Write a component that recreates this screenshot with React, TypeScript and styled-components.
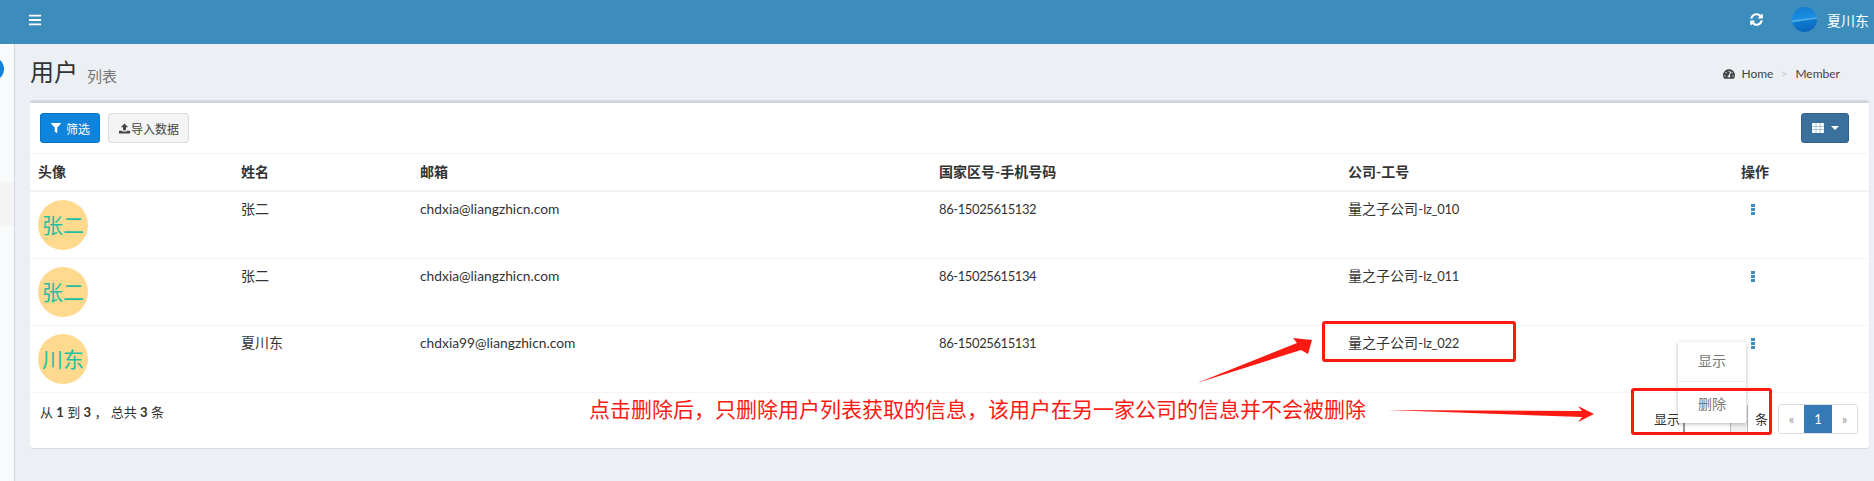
import styled, { createGlobalStyle } from "styled-components";
import { FaBars, FaSyncAlt, FaFilter, FaTachometerAlt } from "react-icons/fa";

const GlobalStyle = createGlobalStyle`
  html, body {
    margin: 0;
    padding: 0;
    background: #ecf0f5;
  }
  body {
    width: 1874px;
    height: 481px;
    overflow: hidden;
    font-family: "Lato", "Noto Sans CJK SC", sans-serif;
    font-size: 14px;
    color: #333;
  }
`;

const Page = styled.div`
  position: relative;
  width: 1874px;
  height: 481px;
  overflow: hidden;
`;

const TopBar = styled.header`
  height: 44px;
  background: #3c8dbc;
  color: #fff;
  display: flex;
  align-items: center;
  padding: 0 0 5px 28px;
  box-sizing: border-box;
`;

const TopRight = styled.div`
  margin-left: auto;
  display: flex;
  align-items: center;
  gap: 29px;
  padding-right: 5px;
`;

const UserBox = styled.div`
  display: flex;
  align-items: center;
  gap: 10px;
  font-size: 14px;
`;

const UserAvatar = styled.div`
  width: 25px;
  height: 25px;
  border-radius: 50%;
  background: linear-gradient(172deg, #0f78cf 0%, #1a8fe0 46%, #5db4ea 50%, #0d7ad0 56%, #0a62b8 100%);
`;

const Body = styled.div`
  display: flex;
  height: 437px;
`;

const Sidebar = styled.aside`
  width: 14px;
  flex: none;
  background: #f9fafc;
  border-right: 1px solid #d2d6de;
  padding-top: 13px;
  overflow: hidden;
`;

const SideDot = styled.div`
  width: 24px;
  height: 24px;
  margin-left: -20px;
  border-radius: 50%;
  background: #1182dc;
`;

const SideItem = styled.div`
  height: 44px;
  margin-top: 101px;
  background: #f4f4f5;
`;

const Content = styled.main`
  flex: 1;
  padding: 0 5px 0 15px;
  min-width: 0;
`;

const TitleRow = styled.div`
  height: 56px;
  display: flex;
  align-items: center;
  box-sizing: border-box;
`;

const Title = styled.h1`
  margin: 0;
  font-size: 24px;
  font-weight: 400;
  line-height: 30px;
`;

const SubTitle = styled.small`
  margin-left: 9px;
  margin-top: 6px;
  font-size: 15px;
  color: #777;
`;

const Crumbs = styled.div`
  margin-left: auto;
  margin-top: 3px;
  display: flex;
  align-items: center;
  font-size: 12px;
  color: #444;
  padding-right: 29px;
`;

const CrumbSep = styled.span`
  color: #ccc;
  margin: 0 8px 0 7px;
`;

const CrumbHome = styled.span`
  margin-left: 6px;
`;

const Card = styled.section`
  background: #fff;
  border-top: 3px solid #d2d6de;
  border-radius: 3px;
  box-shadow: 0 1px 1px rgba(0, 0, 0, 0.1);
  height: 348px;
  box-sizing: border-box;
`;

const Toolbar = styled.div`
  height: 50px;
  padding: 10px 10px 0;
  box-sizing: border-box;
  display: flex;
  gap: 8px;
  align-items: flex-start;
`;

const Button = styled.button<{ $variant: "primary" | "plain" | "dark" }>`
  height: 30px;
  padding: 0 9px 0 10px;
  border-radius: 3px;
  font: inherit;
  font-size: 12px;
  display: inline-flex;
  align-items: center;
  gap: ${(p) => (p.$variant === "plain" ? "1px" : p.$variant === "dark" ? "7px" : "5px")};
  background: ${(p) =>
    p.$variant === "primary" ? "#0f84dc" : p.$variant === "dark" ? "#3c709c" : "#f4f4f4"};
  color: ${(p) => (p.$variant === "plain" ? "#444" : "#fff")};
  border: 1px solid
    ${(p) => (p.$variant === "primary" ? "#0b72c0" : p.$variant === "dark" ? "#32618a" : "#ddd")};
  margin-left: ${(p) => (p.$variant === "dark" ? "auto" : "0")};
  margin-right: ${(p) => (p.$variant === "dark" ? "10px" : "0")};
`;

const Caret = styled.span`
  width: 0;
  height: 0;
  border-left: 4px solid transparent;
  border-right: 4px solid transparent;
  border-top: 4px solid #fff;
`;

const Table = styled.table`
  width: 100%;
  border-collapse: collapse;
  table-layout: fixed;
`;

const Th = styled.th<{ $w: number }>`
  width: ${(p) => p.$w}px;
  height: 37px;
  padding: 0 8px 2px;
  box-sizing: border-box;
  text-align: left;
  font-size: 14px;
  font-weight: 700;
  border-top: 1px solid #f4f4f4;
  border-bottom: 2px solid #f4f4f4;
`;

const Td = styled.td`
  height: 67px;
  padding: 8px;
  box-sizing: border-box;
  vertical-align: top;
  font-size: 14px;
  line-height: 18px;
  border-bottom: 1px solid #f4f4f4;
`;

const MailCell = styled(Td)`
  font-size: 13.8px;
`;

const PhoneCell = styled(Td)`
  font-size: 13px;
  letter-spacing: -0.4px;
`;

const WorkNo = styled.span`
  font-size: 13px;
  letter-spacing: -0.3px;
`;

const Avatar = styled.div`
  width: 50px;
  height: 50px;
  border-radius: 50%;
  background: #ffd98e;
  color: #1fc0a0;
  font-size: 21px;
  line-height: 50px;
  text-align: center;
  white-space: nowrap;
`;

const MenuDots = styled.svg`
  display: block;
  margin: 4px 0 0 10px;
`;

const Footer = styled.div`
  display: flex;
  padding-top: 11px;
  align-items: flex-start;
  font-size: 13px;
`;

const Summary = styled.div`
  margin: -2px 0 0 10px;
  line-height: 20px;
`;

const PageSize = styled.div`
  margin-left: auto;
  display: flex;
  align-items: center;
  height: 30px;
  font-size: 13px;
`;

const SizeSelect = styled.div`
  width: 65px;
  height: 28px;
  margin: 0 7px 0 3px;
  box-sizing: border-box;
  border-left: 2px solid #999;
  border-right: 1px solid #bbb;
  border-bottom: 1px solid #ccc;
  display: flex;
  justify-content: flex-end;
  align-items: flex-end;
`;

const SelectArrow = styled.div`
  width: 17px;
  height: 11px;
  box-sizing: border-box;
  background: #efefef;
  border-left: 1px solid #bbb;
  border-top: 1px solid #ccc;
`;

const Pager = styled.div`
  display: flex;
  margin: 0 11px 0 10px;
  height: 30px;
  border: 1px solid #ddd;
  border-radius: 3px;
  overflow: hidden;
  box-sizing: border-box;
`;

const PageLink = styled.span<{ $active?: boolean }>`
  width: ${(p) => (p.$active ? "28px" : "25px")};
  display: flex;
  align-items: center;
  justify-content: center;
  font-size: 13px;
  background: ${(p) => (p.$active ? "#337ab7" : "#fff")};
  color: ${(p) => (p.$active ? "#fff" : "#999")};
`;

const Popup = styled.div`
  position: absolute;
  left: 1678px;
  top: 342px;
  width: 68px;
  height: 81px;
  background: #fff;
  box-shadow: 0 1px 4px rgba(0, 0, 0, 0.28);
  font-size: 14px;
  color: #777;
`;

const PopupItem = styled.div`
  height: 40px;
  box-sizing: border-box;
  padding-bottom: 4px;
  display: flex;
  align-items: center;
  justify-content: center;
  border-bottom: 1px solid #eee;
  &:last-child {
    border-bottom: none;
    padding: 1px 0 0;
  }
`;

const RedBox = styled.div<{ $x: number; $y: number; $w: number; $h: number }>`
  position: absolute;
  left: ${(p) => p.$x}px;
  top: ${(p) => p.$y}px;
  width: ${(p) => p.$w}px;
  height: ${(p) => p.$h}px;
  box-sizing: border-box;
  border: 3px solid #fb1a12;
  border-radius: 3px;
`;

const Note = styled.div`
  position: absolute;
  left: 589px;
  top: 395px;
  font-size: 21px;
  line-height: 28px;
  color: #fb1a12;
  white-space: nowrap;
`;

const ArrowLayer = styled.svg`
  position: absolute;
  inset: 0;
  pointer-events: none;
`;

const rows = [
  { face: "张二", name: "张二", mail: "chdxia@liangzhicn.com", phone: "86-15025615132", no: "lz_010" },
  { face: "张二", name: "张二", mail: "chdxia@liangzhicn.com", phone: "86-15025615134", no: "lz_011" },
  { face: "川东", name: "夏川东", mail: "chdxia99@liangzhicn.com", phone: "86-15025615131", no: "lz_022" },
];

function UploadIcon() {
  return (
    <svg width="11" height="11" viewBox="0 0 12 11" fill="#444">
      <path d="M6 0 L10 4 H7.6 V7.5 H4.4 V4 H2 Z" />
      <path d="M0 8 H3.5 V8.8 H8.5 V8 H12 V11 H0 Z" />
    </svg>
  );
}

function GridIcon() {
  return (
    <svg width="12" height="10" viewBox="0 0 12 10">
      <rect width="12" height="10" rx="1" fill="#fff" />
      <path d="M4 0 V10 M8 0 V10 M0 3.4 H12 M0 6.6 H12" stroke="#8aafce" strokeWidth="0.7" />
    </svg>
  );
}

function Dots() {
  return (
    <MenuDots width="4" height="11" viewBox="0 0 4 11" fill="#3c8dbc">
      <rect width="4" height="3" />
      <rect y="4" width="4" height="3" />
      <rect y="8" width="4" height="3" />
    </MenuDots>
  );
}

export default function App() {
  return (
    <Page>
      <GlobalStyle />
      <TopBar>
        <FaBars size={14} />
        <TopRight>
          <FaSyncAlt size={13} />
          <UserBox>
            <UserAvatar />
            <span>夏川东</span>
          </UserBox>
        </TopRight>
      </TopBar>
      <Body>
        <Sidebar>
          <SideDot />
          <SideItem />
        </Sidebar>
        <Content>
          <TitleRow>
            <Title>用户</Title>
            <SubTitle>列表</SubTitle>
            <Crumbs>
              <FaTachometerAlt size={12} />
              <CrumbHome>Home</CrumbHome>
              <CrumbSep>&gt;</CrumbSep>
              <span>Member</span>
            </Crumbs>
          </TitleRow>
          <Card>
            <Toolbar>
              <Button $variant="primary">
                <FaFilter size={10} />
                筛选
              </Button>
              <Button $variant="plain">
                <UploadIcon />
                导入数据
              </Button>
              <Button $variant="dark">
                <GridIcon />
                <Caret />
              </Button>
            </Toolbar>
            <Table>
              <thead>
                <tr>
                  <Th $w={203}>头像</Th>
                  <Th $w={179}>姓名</Th>
                  <Th $w={519}>邮箱</Th>
                  <Th $w={409}>国家区号-手机号码</Th>
                  <Th $w={393}>公司-工号</Th>
                  <Th $w={136}>操作</Th>
                </tr>
              </thead>
              <tbody>
                {rows.map((r) => (
                  <tr key={r.phone}>
                    <Td>
                      <Avatar>{r.face}</Avatar>
                    </Td>
                    <Td>{r.name}</Td>
                    <MailCell>{r.mail}</MailCell>
                    <PhoneCell>{r.phone}</PhoneCell>
                    <Td>
                      量之子公司-<WorkNo>{r.no}</WorkNo>
                    </Td>
                    <Td>
                      <Dots />
                    </Td>
                  </tr>
                ))}
              </tbody>
            </Table>
            <Footer>
              <Summary>
                从 <b>1</b> 到 <b>3</b> ， 总共 <b>3</b> 条
              </Summary>
              <PageSize>
                <span>显示</span>
                <SizeSelect>
                  <SelectArrow />
                </SizeSelect>
                <span>条</span>
              </PageSize>
              <Pager>
                <PageLink>«</PageLink>
                <PageLink $active>1</PageLink>
                <PageLink>»</PageLink>
              </Pager>
            </Footer>
          </Card>
        </Content>
      </Body>
      <Popup>
        <PopupItem>显示</PopupItem>
        <PopupItem>删除</PopupItem>
      </Popup>
      <RedBox $x={1322} $y={321} $w={194} $h={41} />
      <RedBox $x={1631} $y={388} $w={141} $h={47} />
      <Note>点击删除后，只删除用户列表获取的信息，该用户在另一家公司的信息并不会被删除</Note>
      <ArrowLayer width="1874" height="481" viewBox="0 0 1874 481">
        <polygon fill="#fb1a12" points="1197,383 1297,343 1293,338 1312,340 1308,354 1301,350" />
        <polygon fill="#fb1a12" points="1388,410 1582,411 1578,406 1594,414 1578,422 1582,417" />
      </ArrowLayer>
    </Page>
  );
}
